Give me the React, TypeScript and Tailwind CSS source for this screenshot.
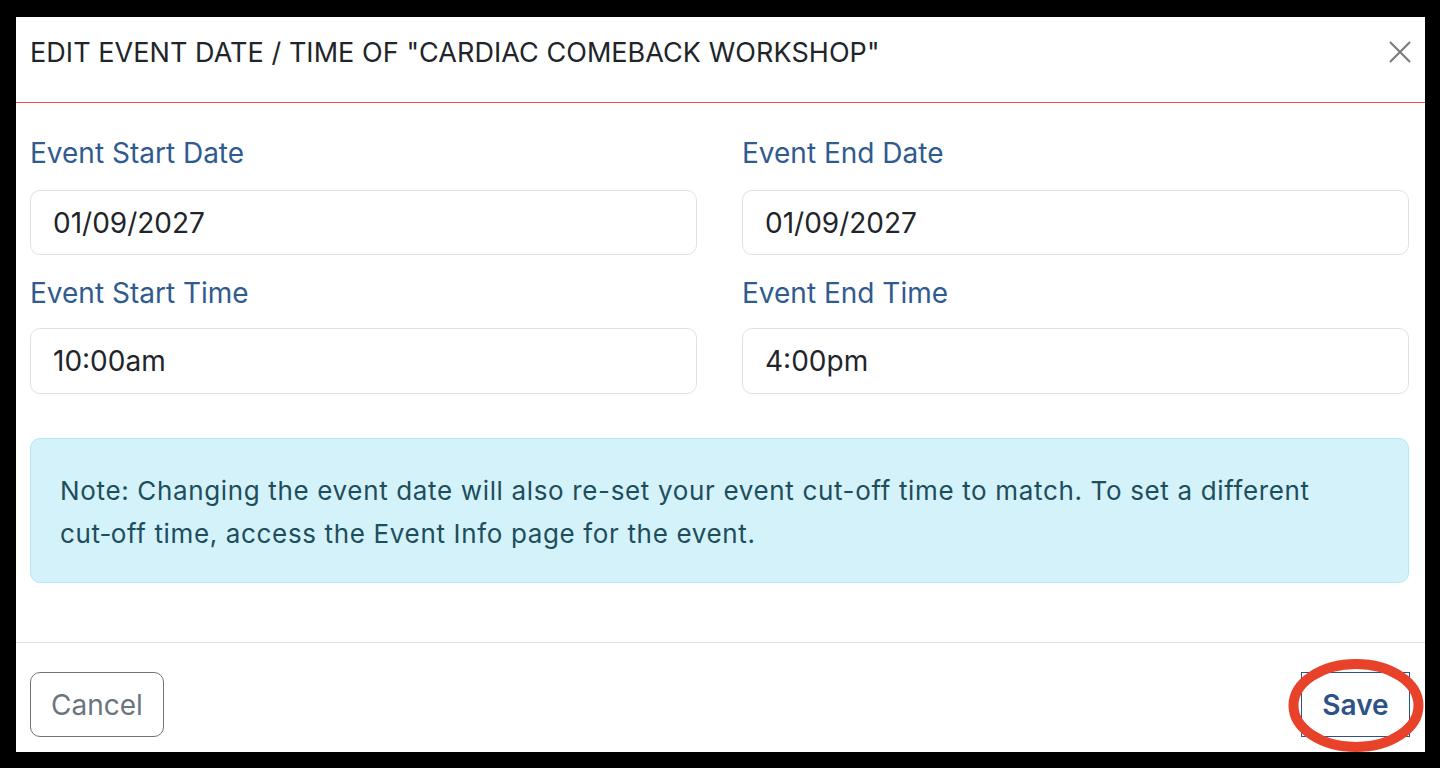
import React from "react";

const font = { fontFamily: "Inter, 'Noto Sans', sans-serif" };

export default function App() {
  return (
    <div
      className="w-[1440px] h-[768px] bg-black pt-[17px] pl-[16px] overflow-hidden"
      style={font}
    >
      <div className="w-[1409px] h-[735px] bg-white flex flex-col overflow-hidden">
        {/* Header */}
        <div className="h-[86px] border-b border-[#e0564b] flex items-start justify-between pl-[14px] pr-[14px] pt-[18px]">
          <h5 className="text-[27px] leading-[36px] text-[#212529] uppercase tracking-[0.002em]">
            Edit Event Date / Time of "Cardiac Comeback Workshop"
          </h5>
          <button className="mt-[6px] w-[22px] h-[22px] text-[#7d7d7d]">
            <svg viewBox="0 0 22 22" width="22" height="22">
              <path
                d="M1 1 L21 21 M21 1 L1 21"
                stroke="currentColor"
                strokeWidth="2.2"
                fill="none"
              />
            </svg>
          </button>
        </div>

        {/* Body */}
        <div className="h-[540px] border-b border-[#dee2e6] pl-[14px] pr-[16px] pt-[32px]">
          <div className="grid grid-cols-2 gap-x-[45px]">
            <Field label="Event Start Date" value="01/09/2027" />
            <Field label="Event End Date" value="01/09/2027" />
            <Field label="Event Start Time" value="10:00am" top />
            <Field label="Event End Time" value="4:00pm" top />
          </div>

          <div className="mt-[44px] h-[145px] rounded-[10px] border border-[#b2e9f7] bg-[#d4f2fa] pl-[29px] pr-[70px] pt-[31px]">
            <p className="text-[26px] leading-[42.5px] tracking-[0.025em] text-[#1e4e5c]">
              Note: Changing the event date will also re-set your event
              cut-off time to match. To set a different cut&#8209;off time,
              access the Event Info page for the event.
            </p>
          </div>
        </div>

        {/* Footer */}
        <div className="flex-1 flex items-start justify-between pl-[14px] pr-[15px] pt-[29px]">
          <button className="h-[65px] w-[134px] rounded-[10px] border border-[#6c757d] text-[28px] text-[#6c757d]">
            Cancel
          </button>
          <div className="relative">
            <button className="h-[65px] w-[109px] border border-[#2d528a] text-[28px] font-semibold text-[#2d528a]">
              Save
            </button>
            <svg
              className="absolute left-[-13px] top-[-13px] overflow-visible pointer-events-none"
              width="136"
              height="93"
              viewBox="0 0 136 93"
            >
              <ellipse
                cx="68"
                cy="46.5"
                rx="62.5"
                ry="41.5"
                fill="none"
                stroke="#e8432a"
                strokeWidth="10"
              />
            </svg>
          </div>
        </div>
      </div>
    </div>
  );
}

function Field({ label, value, top }: any) {
  return (
    <div className={top ? "mt-[20px]" : ""}>
      <label
        className={
          "block text-[28px] leading-[36px] text-[#2f5b8f] " +
          (top ? "mb-[17px]" : "mb-[19px]")
        }
      >
        {label}
      </label>
      <div
        className={
          "rounded-[10px] border border-[#dee2e6] px-[22px] flex items-center text-[28px] text-[#212529] " +
          (top ? "h-[66px]" : "h-[65px]")
        }
      >
        {value}
      </div>
    </div>
  );
}
